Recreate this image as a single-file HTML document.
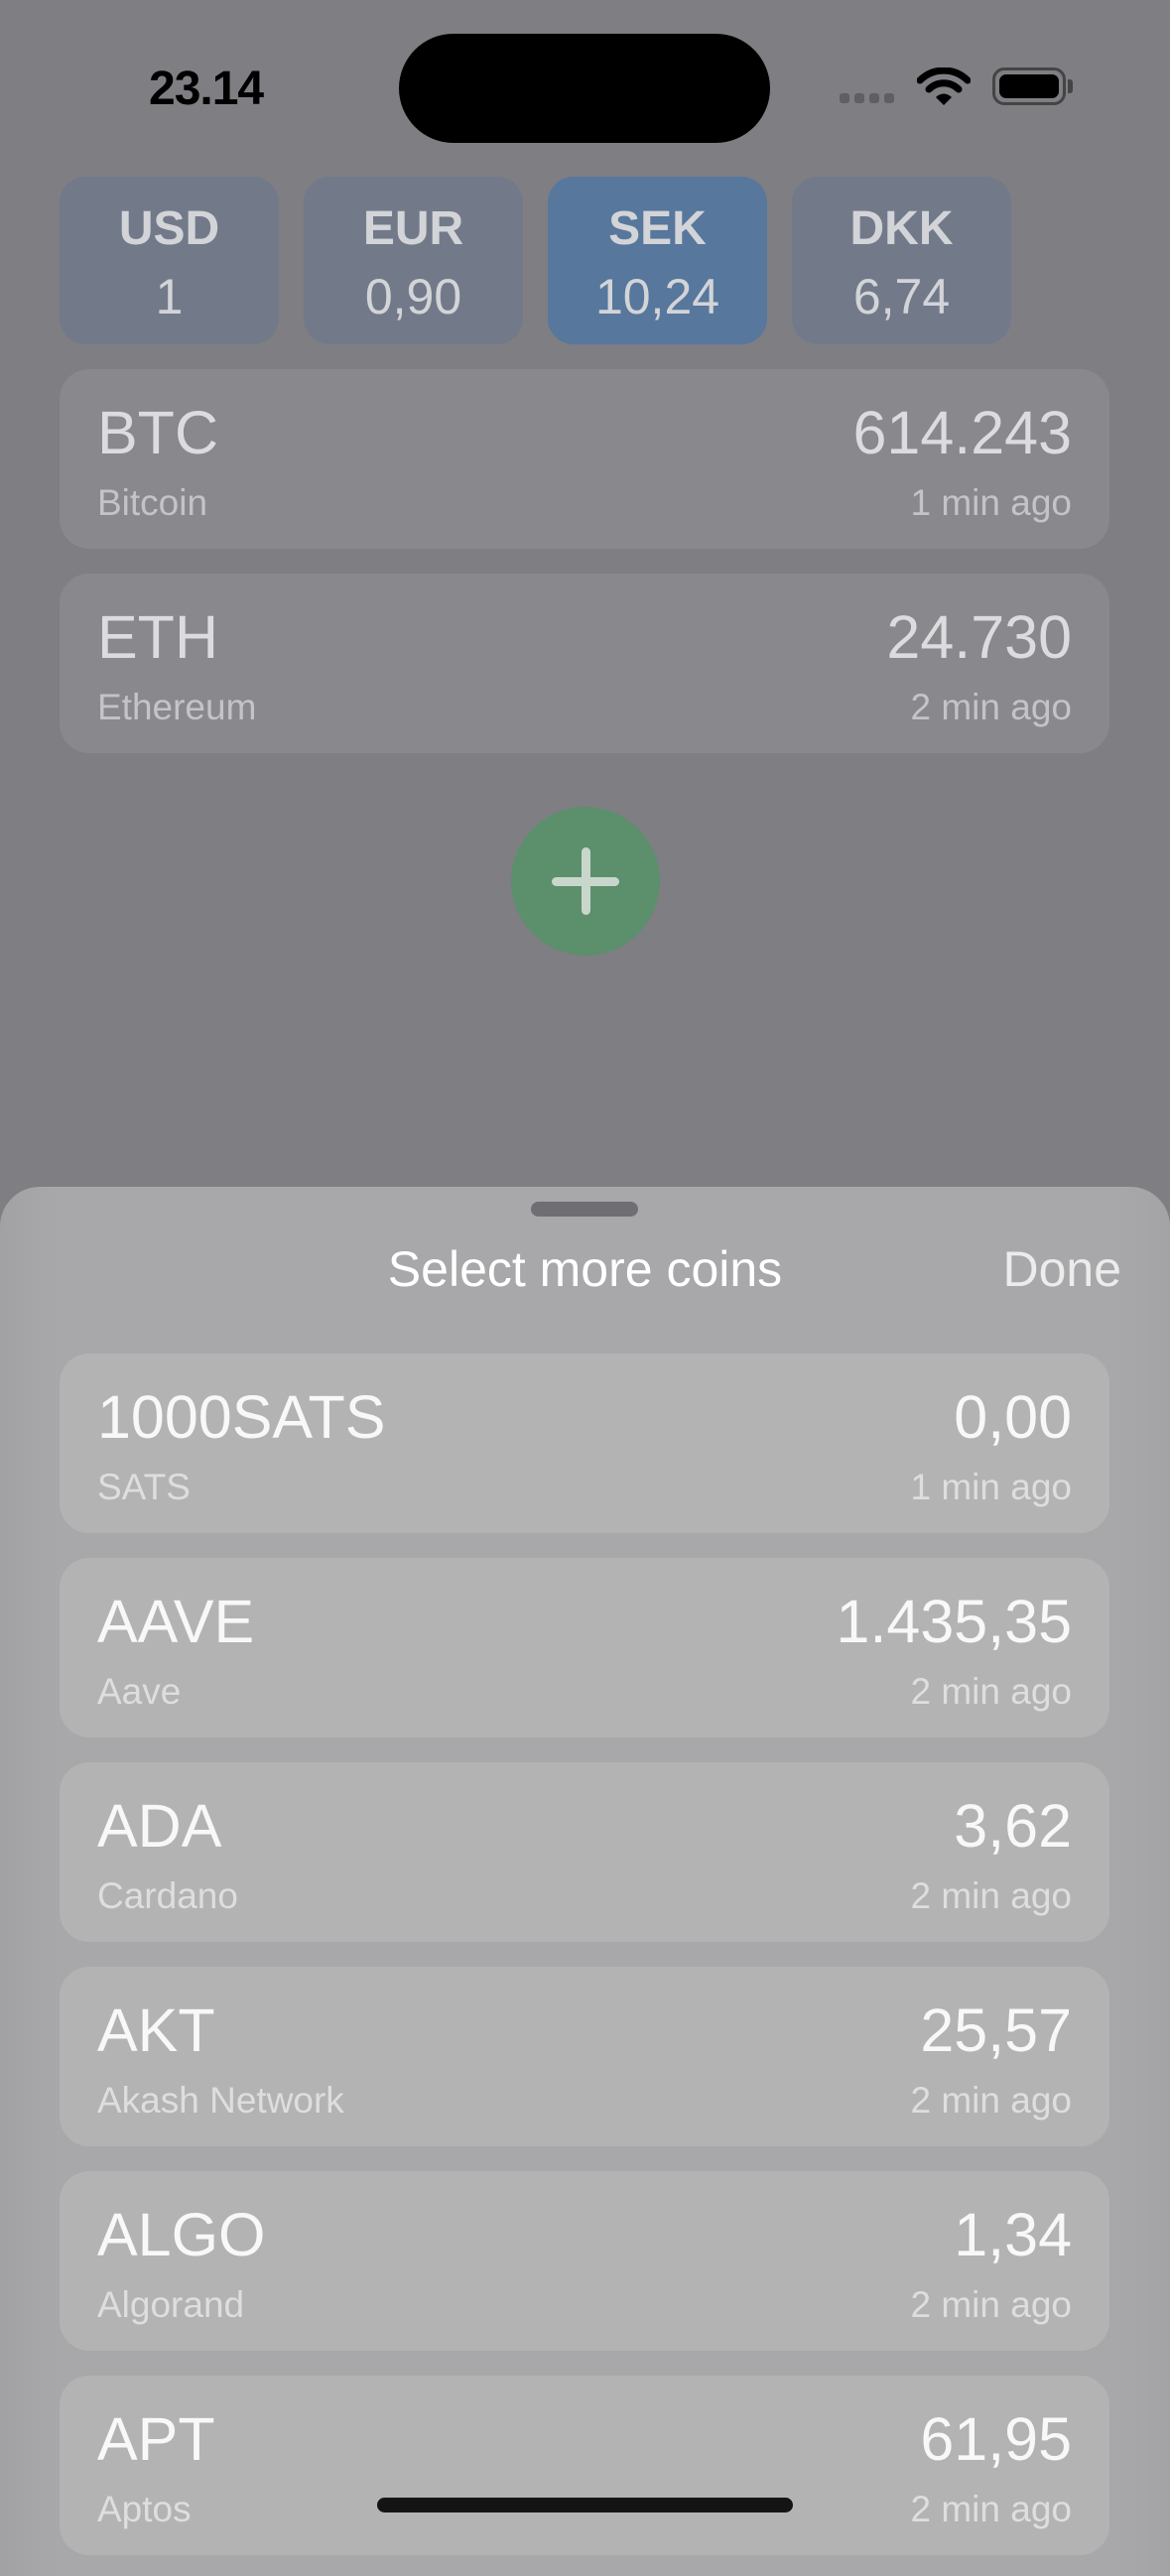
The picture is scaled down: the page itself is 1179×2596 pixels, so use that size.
<!DOCTYPE html>
<html><head><meta charset="utf-8"><style>
*{margin:0;padding:0;box-sizing:border-box}
body{width:1179px;height:2556px;overflow:hidden;background:#7f7e83;font-family:"Liberation Sans",sans-serif;position:relative}
.a{position:absolute}
.tile{position:absolute;top:178px;width:221px;height:169px;border-radius:26px;background:#727a8a;color:#d3d4d8;text-align:center}
.tile .c{position:absolute;left:0;right:0;top:25px;font-size:48px;font-weight:bold}
.tile .v{position:absolute;left:0;right:0;top:92px;font-size:50px}
.card{position:absolute;left:60px;width:1058px;height:181px;border-radius:30px}
.card .s{position:absolute;left:38px;top:29px;font-size:61px;line-height:70px}
.card .n{position:absolute;left:38px;top:113px;font-size:37px;line-height:44px}
.card .p{position:absolute;right:38px;top:29px;font-size:61px;line-height:70px}
.card .t{position:absolute;right:38px;top:113px;font-size:37px;line-height:44px}
.top{background:#89888d;color:#dcdcde}
.top .n,.top .t{color:#c4c4c8}
.sh{background:#b3b3b3;color:#f8f8f8}
.sh .n,.sh .t{color:#dedede}
</style></head><body>
<div class="a" style="left:150px;top:62px;font-size:48px;font-weight:bold;color:#000;letter-spacing:-1px">23.14</div>
<div class="a" style="left:402px;top:34px;width:374px;height:110px;border-radius:55px;background:#000"></div>
<div class="a" style="left:846px;top:94px;width:56px;height:10px">
<span class="a" style="left:0;width:10px;height:10px;border-radius:3px;background:#5f5f63"></span>
<span class="a" style="left:15px;width:10px;height:10px;border-radius:3px;background:#5f5f63"></span>
<span class="a" style="left:30px;width:10px;height:10px;border-radius:3px;background:#5f5f63"></span>
<span class="a" style="left:45px;width:10px;height:10px;border-radius:3px;background:#5f5f63"></span></div>
<svg class="a" style="left:924px;top:68px" width="54" height="40" viewBox="0 0 54 40">
<path d="M3 13 A34 34 0 0 1 51 13" stroke="#000" stroke-width="7" fill="none" stroke-linecap="round"/>
<path d="M12 22 A21 21 0 0 1 42 22" stroke="#000" stroke-width="7" fill="none" stroke-linecap="round"/>
<path d="M27 38 L19 30 A11 11 0 0 1 35 30 Z" fill="#000"/></svg>
<div class="a" style="left:1000px;top:68px;width:74px;height:38px;border:3px solid #444;border-radius:12px;padding:4px"><div style="width:100%;height:100%;background:#000;border-radius:7px"></div></div>
<div class="a" style="left:1076px;top:80px;width:5px;height:14px;background:#444;border-radius:0 3px 3px 0"></div>

<div class="tile" style="left:60px"><div class="c">USD</div><div class="v">1</div></div>
<div class="tile" style="left:306px"><div class="c">EUR</div><div class="v">0,90</div></div>
<div class="tile" style="left:552px;background:#57779c"><div class="c">SEK</div><div class="v">10,24</div></div>
<div class="tile" style="left:798px"><div class="c">DKK</div><div class="v">6,74</div></div>

<div class="card top" style="top:372px"><div class="s">BTC</div><div class="n">Bitcoin</div><div class="p">614.243</div><div class="t">1 min ago</div></div>
<div class="card top" style="top:578px"><div class="s">ETH</div><div class="n">Ethereum</div><div class="p">24.730</div><div class="t">2 min ago</div></div>

<div class="a" style="left:515px;top:813px;width:150px;height:150px;border-radius:50%;background:#5c8f6c"></div>
<div class="a" style="left:556px;top:884px;width:68px;height:9px;border-radius:5px;background:#c9d6cc"></div>
<div class="a" style="left:586px;top:854px;width:9px;height:68px;border-radius:5px;background:#c9d6cc"></div>

<div class="a" style="left:0;top:1196px;width:1179px;height:1400px;border-radius:40px 40px 0 0;background:linear-gradient(90deg,#a2a2a4 0,#a8a8aa 60px,#a8a8aa 1119px,#a4a4a6 100%)"></div>
<div class="a" style="left:535px;top:1211px;width:108px;height:15px;border-radius:8px;background:#6f6f73"></div>
<div class="a" style="left:0;width:1179px;top:1250px;text-align:center;font-size:50px;color:#fff">Select more coins</div>
<div class="a" style="right:49px;top:1250px;font-size:50px;color:#ececec">Done</div>

<div class="card sh" style="top:1364px"><div class="s">1000SATS</div><div class="n">SATS</div><div class="p">0,00</div><div class="t">1 min ago</div></div>
<div class="card sh" style="top:1570px"><div class="s">AAVE</div><div class="n">Aave</div><div class="p">1.435,35</div><div class="t">2 min ago</div></div>
<div class="card sh" style="top:1776px"><div class="s">ADA</div><div class="n">Cardano</div><div class="p">3,62</div><div class="t">2 min ago</div></div>
<div class="card sh" style="top:1982px"><div class="s">AKT</div><div class="n">Akash Network</div><div class="p">25,57</div><div class="t">2 min ago</div></div>
<div class="card sh" style="top:2188px"><div class="s">ALGO</div><div class="n">Algorand</div><div class="p">1,34</div><div class="t">2 min ago</div></div>
<div class="card sh" style="top:2394px"><div class="s">APT</div><div class="n">Aptos</div><div class="p">61,95</div><div class="t">2 min ago</div></div>

<div class="a" style="left:380px;top:2517px;width:419px;height:15px;border-radius:8px;background:#141414"></div>
</body></html>
